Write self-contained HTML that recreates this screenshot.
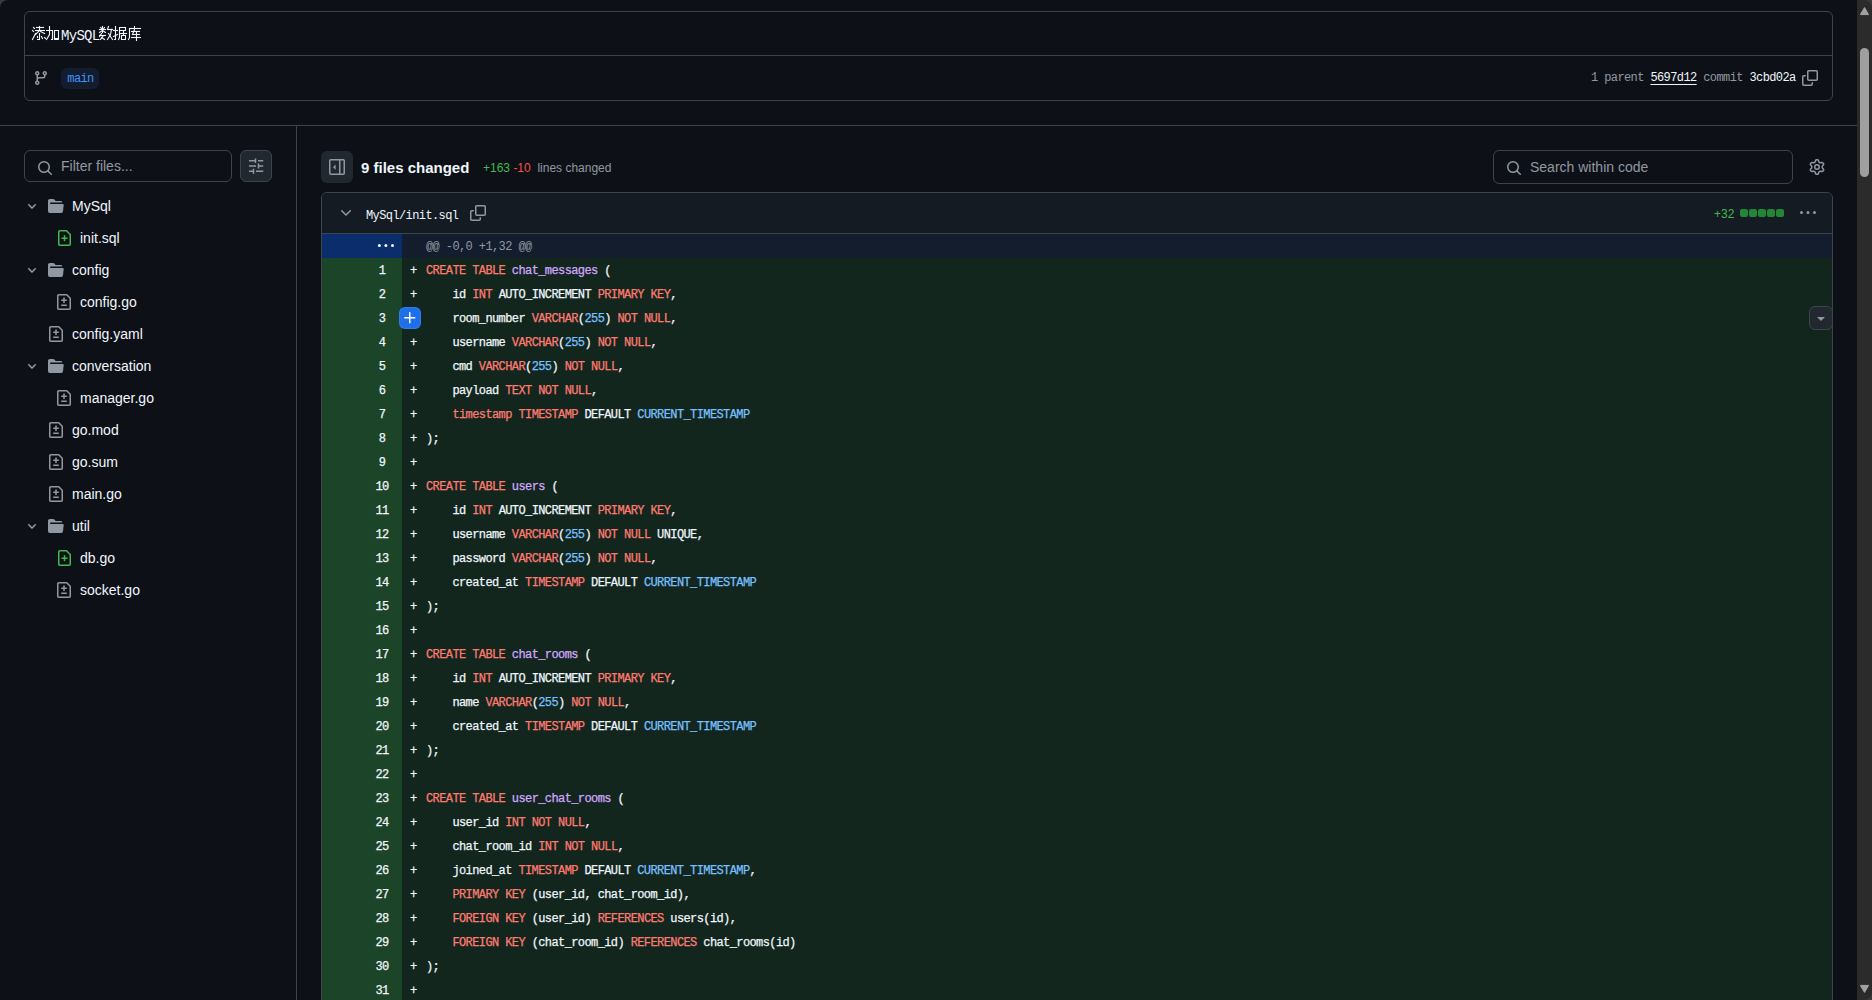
<!DOCTYPE html>
<html><head><meta charset="utf-8">
<style>
*{box-sizing:border-box;margin:0;padding:0}
html,body{width:1872px;height:1000px;overflow:hidden;background:#0d1117;font-family:"Liberation Sans",sans-serif;color:#f0f6fc}
.a{position:absolute}
.mono{font-family:"Liberation Mono",monospace}
#corner{left:0;top:0;width:10px;height:10px;background:#3b3b3b}
#corner::after{content:"";position:absolute;left:0;top:0;width:20px;height:20px;border-radius:8px 0 0 0;background:#0d1117}
.box{border:1px solid #3d444d;border-radius:6px}
#commit{left:24px;top:11px;width:1809px;height:90px}
#commit .div{left:0;right:0;top:43px;height:1px;background:#3d444d}
#mysql{left:61px;top:28px;font-size:14px;line-height:16px;white-space:pre;letter-spacing:-0.7px}
#badge{left:36px;top:56px;width:38px;height:21px;border-radius:6px;background:#121d2f;color:#4493f8;font-size:12px;line-height:22px;text-align:center;letter-spacing:-0.6px;padding-left:1px}
#meta{left:1566px;top:56px;font-size:12px;line-height:21px;color:#9198a1;white-space:pre;letter-spacing:-0.6px}
#meta .w{color:#f0f6fc}
#meta .ul{text-decoration:underline;text-underline-offset:3px}
#hdiv{left:0;top:125px;width:1857px;height:1px;background:#3d444d}
#vdiv{left:296px;top:126px;width:1px;height:874px;background:#3d444d}
#filter{left:24px;top:150px;width:208px;height:32px}
#filter span{position:absolute;left:36px;top:7px;font-size:14px;line-height:16px;color:#9198a1}
#setbtn{left:240px;top:150px;width:32px;height:32px;background:#212830}
.tree{left:0;top:190px;width:296px}
.ti{position:absolute;height:32px;font-size:14px;line-height:32px;color:#f0f6fc;white-space:pre}
#colbtn{left:321px;top:151px;width:32px;height:32px;border-radius:6px;background:#212830}
#fc{left:361px;top:157px;font-size:15px;font-weight:bold;line-height:22px}
#stat{left:483px;top:160px;font-size:12px;line-height:16px;white-space:pre;color:#9198a1}
#search{left:1493px;top:150px;width:300px;height:34px}
#search span{position:absolute;left:36px;top:8px;font-size:14px;line-height:16px;color:#9198a1}
#file{left:321px;top:192px;width:1512px;height:830px;overflow:hidden}
#fh{left:0;top:0;width:1510px;height:41px;background:#151b23;border-bottom:1px solid #3d444d;border-radius:6px 6px 0 0}
#fname{left:44px;top:15px;font-size:12px;line-height:16px;color:#f0f6fc;letter-spacing:-0.6px}
#plus32{left:1392px;top:13px;font-size:12px;line-height:16px;color:#3fb950}
.sq{position:absolute;top:16px;width:8px;height:8px;border-radius:2px;background:#238636}
.r{position:absolute;left:322px;width:1510px;height:24px}
.r b{position:absolute;left:0;top:0;width:80px;height:24px;background:#1c4428;font-weight:normal;text-align:center;padding-left:40px}
.r u,.r s{text-decoration:none}
.r b,.r u,.r s{-webkit-text-stroke:0.25px currentColor;font-family:"Liberation Mono",monospace;font-size:12px;line-height:26px;letter-spacing:-0.6px;color:#f0f6fc;white-space:pre}
.r u{position:absolute;left:88px;top:0}
.r s{position:absolute;left:80px;top:0;width:1430px;height:24px;background:#12261e;padding-left:24px}
.r u{z-index:2}
i{font-style:normal}
i.k{color:#ff7b72}
i.e{color:#d2a8ff}
i.c{color:#79c0ff}
#hunk{left:322px;top:234px;width:1510px;height:24px;background:#131d2e}
#hunknum{left:322px;top:234px;width:80px;height:24px;background:#0c2d6b}
#hunktxt{left:426px;top:234px;font-size:12px;line-height:26px;letter-spacing:-0.6px;color:#9198a1;white-space:pre}
#sb{left:1857px;top:0;width:15px;height:1000px;background:#2b2b2b}
#thumb{left:1860px;top:48px;width:9px;height:129px;border-radius:5px;background:#9f9f9f}
</style></head><body>
<div class="a" id="corner"></div>
<div class="a box" id="commit">
    <div class="a div"></div>
  <svg class="a" style="left:8px;top:58px" width="16" height="16" viewBox="0 0 16 16" fill="#9198a1"><path d="M9.5 3.25a2.25 2.25 0 1 1 3 2.122V6A2.5 2.5 0 0 1 10 8.5H6a1 1 0 0 0-1 1v1.128a2.251 2.251 0 1 1-1.5 0V5.372a2.25 2.25 0 1 1 1.5 0v1.836A2.493 2.493 0 0 1 6 7h4a1 1 0 0 0 1-1v-.628A2.25 2.25 0 0 1 9.5 3.25Zm-6 0a.75.75 0 1 0 1.5 0 .75.75 0 0 0-1.5 0Zm8.25-.75a.75.75 0 1 0 0 1.5.75.75 0 0 0 0-1.5ZM4.25 12a.75.75 0 1 0 0 1.5.75.75 0 0 0 0-1.5Z"/></svg>
  <div class="a mono" id="badge">main</div>
  <div class="a mono" id="meta">1 parent <span class="w ul">5697d12</span> commit <span class="w">3cbd02a</span>    </div>
  <svg class="a" style="left:1777px;top:58px" width="16" height="16" viewBox="0 0 16 16" fill="#9198a1"><path d="M0 6.75C0 5.784.784 5 1.75 5h1.5a.75.75 0 0 1 0 1.5h-1.5a.25.25 0 0 0-.25.25v7.5c0 .138.112.25.25.25h7.5a.25.25 0 0 0 .25-.25v-1.5a.75.75 0 0 1 1.5 0v1.5A1.75 1.75 0 0 1 9.25 16h-7.5A1.75 1.75 0 0 1 0 14.25Z"/><path d="M5 1.75C5 .784 5.784 0 6.75 0h7.5C15.216 0 16 .784 16 1.75v7.5A1.75 1.75 0 0 1 14.25 11h-7.5A1.75 1.75 0 0 1 5 9.25Zm1.75-.25a.25.25 0 0 0-.25.25v7.5c0 .138.112.25.25.25h7.5a.25.25 0 0 0 .25-.25v-7.5a.25.25 0 0 0-.25-.25Z"/></svg>
</div>
<svg class="a" style="left:0;top:0" width="150" height="50" fill="none" stroke="#f0f6fc" stroke-width="1.1" stroke-linecap="square"><polyline points="33.5,27.5 34.5,28.5"/><polyline points="32.5,30.5 33.5,31.5"/><polyline points="35.5,33.5 32.5,39.5"/><polyline points="36.5,27.5 43.5,27.5"/><polyline points="35.5,30.5 44.5,30.5"/><polyline points="39.5,26.5 39.5,30.5"/><polyline points="39.5,30.5 35.5,34.5"/><polyline points="40.5,31.5 44.5,33.5"/><polyline points="39.5,33.5 39.5,39.5 37.5,39.5"/><polyline points="37.5,36.5 37.5,37.5"/><polyline points="41.5,36.5 42.5,38.5"/><polyline points="44.5,37.5 45.5,38.5"/><polyline points="46.5,30.5 52.5,30.5 52.5,39.5 51.5,39.5"/><polyline points="49.5,26.5 49.5,34.5 46.5,39.5"/><polyline points="54.5,30.5 58.5,30.5 58.5,39.5 54.5,39.5 54.5,30.5"/><polyline points="54.5,38.5 58.5,38.5"/><polyline points="100.5,27.5 101.5,28.5"/><polyline points="104.5,27.5 103.5,28.5"/><polyline points="99.5,29.5 105.5,29.5"/><polyline points="102.5,26.5 102.5,32.5"/><polyline points="102.5,30.5 99.5,32.5"/><polyline points="102.5,30.5 105.5,32.5"/><polyline points="101.5,33.5 99.5,36.5"/><polyline points="99.5,35.5 105.5,35.5"/><polyline points="103.5,35.5 100.5,39.5"/><polyline points="101.5,37.5 104.5,39.5"/><polyline points="108.5,26.5 107.5,29.5"/><polyline points="107.5,29.5 112.5,29.5"/><polyline points="111.5,29.5 110.5,34.5 107.5,39.5"/><polyline points="108.5,33.5 112.5,39.5"/><polyline points="113.5,30.5 117.5,30.5"/><polyline points="115.5,26.5 115.5,39.5 114.5,39.5"/><polyline points="113.5,36.5 117.5,34.5"/><polyline points="119.5,27.5 125.5,27.5 125.5,30.5 119.5,30.5"/><polyline points="119.5,27.5 119.5,37.5 118.5,39.5"/><polyline points="120.5,33.5 126.5,33.5"/><polyline points="123.5,31.5 123.5,35.5"/><polyline points="121.5,35.5 125.5,35.5 125.5,39.5 121.5,39.5 121.5,35.5"/><polyline points="134.5,26.5 134.5,27.5"/><polyline points="129.5,28.5 140.5,28.5"/><polyline points="129.5,28.5 129.5,37.5 128.5,39.5"/><polyline points="131.5,31.5 139.5,31.5"/><polyline points="134.5,29.5 132.5,34.5"/><polyline points="132.5,34.5 139.5,34.5"/><polyline points="131.5,37.5 140.5,37.5"/><polyline points="136.5,32.5 136.5,40.5"/></svg>
<div class="a mono" id="mysql">MySQL</div>
<div class="a" id="hdiv"></div>
<div class="a" id="vdiv"></div>
<div class="a box" id="filter"><svg class="a" style="left:12px;top:9px" width="16" height="16" viewBox="0 0 16 16" fill="#9198a1"><path d="M10.68 11.74a6 6 0 0 1-7.922-8.982 6 6 0 0 1 8.982 7.922l3.04 3.04a.749.749 0 0 1-.326 1.275.749.749 0 0 1-.734-.215ZM11.5 7a4.499 4.499 0 1 0-8.997 0A4.499 4.499 0 0 0 11.5 7Z"/></svg><span>Filter files...</span></div>
<div class="a box" id="setbtn"><svg class="a" style="left:7px;top:7px" width="16" height="16" viewBox="0 0 16 16" fill="none" stroke="#9198a1" stroke-width="1.5"><path d="M1 2.75h6.5M7.5 0.5v4.5M10 2.75h5.25M1 8h7M10.5 5.5v5M10.5 8h4.75M1 13.25h4.5M5.5 10.75v5M8 13.25h7.25"/></svg></div>
<div class="a tree" id="tree"></div>
<svg class="a" style="left:26px;top:200px" width="12" height="12" viewBox="0 0 12 12" fill="#9198a1"><path d="M6 8.825c-.2 0-.4-.1-.5-.2l-3.3-3.3c-.3-.3-.3-.8 0-1.1.3-.3.8-.3 1.1 0l2.7 2.7 2.7-2.7c.3-.3.8-.3 1.1 0 .3.3.3.8 0 1.1l-3.2 3.2c-.2.2-.4.3-.6.3Z"/></svg>
<svg class="a" style="left:48px;top:198px" width="16" height="16" viewBox="0 0 16 16" fill="#9198a1"><path d="M.513 1.513A1.75 1.75 0 0 1 1.75 1h3.5c.55 0 1.07.26 1.4.7l.9 1.2a.25.25 0 0 0 .2.1H13a1 1 0 0 1 1 1v.5H2.75a.75.75 0 0 0 0 1.5h11.978a1 1 0 0 1 .994 1.117L15 13.25A1.75 1.75 0 0 1 13.25 15H1.75A1.75 1.75 0 0 1 0 13.25V2.75c0-.464.184-.91.513-1.237Z"/></svg>
<div class="ti" style="left:72px;top:190px">MySql</div>
<svg class="a" style="left:56px;top:230px" width="16" height="16" viewBox="0 0 16 16" fill="none" stroke="#3fb950" stroke-width="1.5"><path d="M3.75 0.75h6.7l3.8 3.8v9.7a1 1 0 0 1-1 1h-9.5a1 1 0 0 1-1-1v-12.5a1 1 0 0 1 1-1Z"/><path d="M8.5 5.25v6M5.5 8.25h6"/></svg>
<div class="ti" style="left:80px;top:222px">init.sql</div>
<svg class="a" style="left:26px;top:264px" width="12" height="12" viewBox="0 0 12 12" fill="#9198a1"><path d="M6 8.825c-.2 0-.4-.1-.5-.2l-3.3-3.3c-.3-.3-.3-.8 0-1.1.3-.3.8-.3 1.1 0l2.7 2.7 2.7-2.7c.3-.3.8-.3 1.1 0 .3.3.3.8 0 1.1l-3.2 3.2c-.2.2-.4.3-.6.3Z"/></svg>
<svg class="a" style="left:48px;top:262px" width="16" height="16" viewBox="0 0 16 16" fill="#9198a1"><path d="M.513 1.513A1.75 1.75 0 0 1 1.75 1h3.5c.55 0 1.07.26 1.4.7l.9 1.2a.25.25 0 0 0 .2.1H13a1 1 0 0 1 1 1v.5H2.75a.75.75 0 0 0 0 1.5h11.978a1 1 0 0 1 .994 1.117L15 13.25A1.75 1.75 0 0 1 13.25 15H1.75A1.75 1.75 0 0 1 0 13.25V2.75c0-.464.184-.91.513-1.237Z"/></svg>
<div class="ti" style="left:72px;top:254px">config</div>
<svg class="a" style="left:56px;top:294px" width="16" height="16" viewBox="0 0 16 16" fill="#9198a1"><path d="M1 1.75C1 .784 1.784 0 2.75 0h7.586c.464 0 .909.184 1.237.513l2.914 2.914c.329.328.513.773.513 1.237v9.586A1.75 1.75 0 0 1 13.25 16H2.75A1.75 1.75 0 0 1 1 14.25Zm1.75-.25a.25.25 0 0 0-.25.25v12.5c0 .138.112.25.25.25h10.5a.25.25 0 0 0 .25-.25V4.664a.25.25 0 0 0-.073-.177l-2.914-2.914a.25.25 0 0 0-.177-.073ZM8 3.25a.75.75 0 0 1 .75.75v1.5h1.5a.75.75 0 0 1 0 1.5h-1.5v1.5a.75.75 0 0 1-1.5 0V7h-1.5a.75.75 0 0 1 0-1.5h1.5V4A.75.75 0 0 1 8 3.25Zm-3 8a.75.75 0 0 1 .75-.75h4.5a.75.75 0 0 1 0 1.5h-4.5a.75.75 0 0 1-.75-.75Z"/></svg>
<div class="ti" style="left:80px;top:286px">config.go</div>
<svg class="a" style="left:48px;top:326px" width="16" height="16" viewBox="0 0 16 16" fill="#9198a1"><path d="M1 1.75C1 .784 1.784 0 2.75 0h7.586c.464 0 .909.184 1.237.513l2.914 2.914c.329.328.513.773.513 1.237v9.586A1.75 1.75 0 0 1 13.25 16H2.75A1.75 1.75 0 0 1 1 14.25Zm1.75-.25a.25.25 0 0 0-.25.25v12.5c0 .138.112.25.25.25h10.5a.25.25 0 0 0 .25-.25V4.664a.25.25 0 0 0-.073-.177l-2.914-2.914a.25.25 0 0 0-.177-.073ZM8 3.25a.75.75 0 0 1 .75.75v1.5h1.5a.75.75 0 0 1 0 1.5h-1.5v1.5a.75.75 0 0 1-1.5 0V7h-1.5a.75.75 0 0 1 0-1.5h1.5V4A.75.75 0 0 1 8 3.25Zm-3 8a.75.75 0 0 1 .75-.75h4.5a.75.75 0 0 1 0 1.5h-4.5a.75.75 0 0 1-.75-.75Z"/></svg>
<div class="ti" style="left:72px;top:318px">config.yaml</div>
<svg class="a" style="left:26px;top:360px" width="12" height="12" viewBox="0 0 12 12" fill="#9198a1"><path d="M6 8.825c-.2 0-.4-.1-.5-.2l-3.3-3.3c-.3-.3-.3-.8 0-1.1.3-.3.8-.3 1.1 0l2.7 2.7 2.7-2.7c.3-.3.8-.3 1.1 0 .3.3.3.8 0 1.1l-3.2 3.2c-.2.2-.4.3-.6.3Z"/></svg>
<svg class="a" style="left:48px;top:358px" width="16" height="16" viewBox="0 0 16 16" fill="#9198a1"><path d="M.513 1.513A1.75 1.75 0 0 1 1.75 1h3.5c.55 0 1.07.26 1.4.7l.9 1.2a.25.25 0 0 0 .2.1H13a1 1 0 0 1 1 1v.5H2.75a.75.75 0 0 0 0 1.5h11.978a1 1 0 0 1 .994 1.117L15 13.25A1.75 1.75 0 0 1 13.25 15H1.75A1.75 1.75 0 0 1 0 13.25V2.75c0-.464.184-.91.513-1.237Z"/></svg>
<div class="ti" style="left:72px;top:350px">conversation</div>
<svg class="a" style="left:56px;top:390px" width="16" height="16" viewBox="0 0 16 16" fill="#9198a1"><path d="M1 1.75C1 .784 1.784 0 2.75 0h7.586c.464 0 .909.184 1.237.513l2.914 2.914c.329.328.513.773.513 1.237v9.586A1.75 1.75 0 0 1 13.25 16H2.75A1.75 1.75 0 0 1 1 14.25Zm1.75-.25a.25.25 0 0 0-.25.25v12.5c0 .138.112.25.25.25h10.5a.25.25 0 0 0 .25-.25V4.664a.25.25 0 0 0-.073-.177l-2.914-2.914a.25.25 0 0 0-.177-.073ZM8 3.25a.75.75 0 0 1 .75.75v1.5h1.5a.75.75 0 0 1 0 1.5h-1.5v1.5a.75.75 0 0 1-1.5 0V7h-1.5a.75.75 0 0 1 0-1.5h1.5V4A.75.75 0 0 1 8 3.25Zm-3 8a.75.75 0 0 1 .75-.75h4.5a.75.75 0 0 1 0 1.5h-4.5a.75.75 0 0 1-.75-.75Z"/></svg>
<div class="ti" style="left:80px;top:382px">manager.go</div>
<svg class="a" style="left:48px;top:422px" width="16" height="16" viewBox="0 0 16 16" fill="#9198a1"><path d="M1 1.75C1 .784 1.784 0 2.75 0h7.586c.464 0 .909.184 1.237.513l2.914 2.914c.329.328.513.773.513 1.237v9.586A1.75 1.75 0 0 1 13.25 16H2.75A1.75 1.75 0 0 1 1 14.25Zm1.75-.25a.25.25 0 0 0-.25.25v12.5c0 .138.112.25.25.25h10.5a.25.25 0 0 0 .25-.25V4.664a.25.25 0 0 0-.073-.177l-2.914-2.914a.25.25 0 0 0-.177-.073ZM8 3.25a.75.75 0 0 1 .75.75v1.5h1.5a.75.75 0 0 1 0 1.5h-1.5v1.5a.75.75 0 0 1-1.5 0V7h-1.5a.75.75 0 0 1 0-1.5h1.5V4A.75.75 0 0 1 8 3.25Zm-3 8a.75.75 0 0 1 .75-.75h4.5a.75.75 0 0 1 0 1.5h-4.5a.75.75 0 0 1-.75-.75Z"/></svg>
<div class="ti" style="left:72px;top:414px">go.mod</div>
<svg class="a" style="left:48px;top:454px" width="16" height="16" viewBox="0 0 16 16" fill="#9198a1"><path d="M1 1.75C1 .784 1.784 0 2.75 0h7.586c.464 0 .909.184 1.237.513l2.914 2.914c.329.328.513.773.513 1.237v9.586A1.75 1.75 0 0 1 13.25 16H2.75A1.75 1.75 0 0 1 1 14.25Zm1.75-.25a.25.25 0 0 0-.25.25v12.5c0 .138.112.25.25.25h10.5a.25.25 0 0 0 .25-.25V4.664a.25.25 0 0 0-.073-.177l-2.914-2.914a.25.25 0 0 0-.177-.073ZM8 3.25a.75.75 0 0 1 .75.75v1.5h1.5a.75.75 0 0 1 0 1.5h-1.5v1.5a.75.75 0 0 1-1.5 0V7h-1.5a.75.75 0 0 1 0-1.5h1.5V4A.75.75 0 0 1 8 3.25Zm-3 8a.75.75 0 0 1 .75-.75h4.5a.75.75 0 0 1 0 1.5h-4.5a.75.75 0 0 1-.75-.75Z"/></svg>
<div class="ti" style="left:72px;top:446px">go.sum</div>
<svg class="a" style="left:48px;top:486px" width="16" height="16" viewBox="0 0 16 16" fill="#9198a1"><path d="M1 1.75C1 .784 1.784 0 2.75 0h7.586c.464 0 .909.184 1.237.513l2.914 2.914c.329.328.513.773.513 1.237v9.586A1.75 1.75 0 0 1 13.25 16H2.75A1.75 1.75 0 0 1 1 14.25Zm1.75-.25a.25.25 0 0 0-.25.25v12.5c0 .138.112.25.25.25h10.5a.25.25 0 0 0 .25-.25V4.664a.25.25 0 0 0-.073-.177l-2.914-2.914a.25.25 0 0 0-.177-.073ZM8 3.25a.75.75 0 0 1 .75.75v1.5h1.5a.75.75 0 0 1 0 1.5h-1.5v1.5a.75.75 0 0 1-1.5 0V7h-1.5a.75.75 0 0 1 0-1.5h1.5V4A.75.75 0 0 1 8 3.25Zm-3 8a.75.75 0 0 1 .75-.75h4.5a.75.75 0 0 1 0 1.5h-4.5a.75.75 0 0 1-.75-.75Z"/></svg>
<div class="ti" style="left:72px;top:478px">main.go</div>
<svg class="a" style="left:26px;top:520px" width="12" height="12" viewBox="0 0 12 12" fill="#9198a1"><path d="M6 8.825c-.2 0-.4-.1-.5-.2l-3.3-3.3c-.3-.3-.3-.8 0-1.1.3-.3.8-.3 1.1 0l2.7 2.7 2.7-2.7c.3-.3.8-.3 1.1 0 .3.3.3.8 0 1.1l-3.2 3.2c-.2.2-.4.3-.6.3Z"/></svg>
<svg class="a" style="left:48px;top:518px" width="16" height="16" viewBox="0 0 16 16" fill="#9198a1"><path d="M.513 1.513A1.75 1.75 0 0 1 1.75 1h3.5c.55 0 1.07.26 1.4.7l.9 1.2a.25.25 0 0 0 .2.1H13a1 1 0 0 1 1 1v.5H2.75a.75.75 0 0 0 0 1.5h11.978a1 1 0 0 1 .994 1.117L15 13.25A1.75 1.75 0 0 1 13.25 15H1.75A1.75 1.75 0 0 1 0 13.25V2.75c0-.464.184-.91.513-1.237Z"/></svg>
<div class="ti" style="left:72px;top:510px">util</div>
<svg class="a" style="left:56px;top:550px" width="16" height="16" viewBox="0 0 16 16" fill="none" stroke="#3fb950" stroke-width="1.5"><path d="M3.75 0.75h6.7l3.8 3.8v9.7a1 1 0 0 1-1 1h-9.5a1 1 0 0 1-1-1v-12.5a1 1 0 0 1 1-1Z"/><path d="M8.5 5.25v6M5.5 8.25h6"/></svg>
<div class="ti" style="left:80px;top:542px">db.go</div>
<svg class="a" style="left:56px;top:582px" width="16" height="16" viewBox="0 0 16 16" fill="#9198a1"><path d="M1 1.75C1 .784 1.784 0 2.75 0h7.586c.464 0 .909.184 1.237.513l2.914 2.914c.329.328.513.773.513 1.237v9.586A1.75 1.75 0 0 1 13.25 16H2.75A1.75 1.75 0 0 1 1 14.25Zm1.75-.25a.25.25 0 0 0-.25.25v12.5c0 .138.112.25.25.25h10.5a.25.25 0 0 0 .25-.25V4.664a.25.25 0 0 0-.073-.177l-2.914-2.914a.25.25 0 0 0-.177-.073ZM8 3.25a.75.75 0 0 1 .75.75v1.5h1.5a.75.75 0 0 1 0 1.5h-1.5v1.5a.75.75 0 0 1-1.5 0V7h-1.5a.75.75 0 0 1 0-1.5h1.5V4A.75.75 0 0 1 8 3.25Zm-3 8a.75.75 0 0 1 .75-.75h4.5a.75.75 0 0 1 0 1.5h-4.5a.75.75 0 0 1-.75-.75Z"/></svg>
<div class="ti" style="left:80px;top:574px">socket.go</div><div class="a" id="colbtn"><svg class="a" style="left:8px;top:8px" width="16" height="16" viewBox="0 0 16 16" fill="#9198a1"><path d="M1.75 0h12.5C15.216 0 16 .784 16 1.75v12.5A1.75 1.75 0 0 1 14.25 16H1.75A1.75 1.75 0 0 1 0 14.25V1.75C0 .784.784 0 1.750 0ZM1.5 1.75v12.5c0 .138.112.25.25.25H10v-13H1.75a.25.25 0 0 0-.25.25ZM11.5 14.5h2.75a.25.25 0 0 0 .25-.25V1.75a.25.25 0 0 0-.25-.25H11.5Z"/><path d="M4 8.2 6.6 5.6v5.2Z"/></svg></div>
<div class="a" id="fc">9 files changed</div>
<div class="a" id="stat"><span style="color:#3fb950">+163</span> <span style="color:#f85149">-10</span>  lines changed</div>
<div class="a box" id="search"><svg class="a" style="left:12px;top:9px" width="16" height="16" viewBox="0 0 16 16" fill="#9198a1"><path d="M10.68 11.74a6 6 0 0 1-7.922-8.982 6 6 0 0 1 8.982 7.922l3.04 3.04a.749.749 0 0 1-.326 1.275.749.749 0 0 1-.734-.215ZM11.5 7a4.499 4.499 0 1 0-8.997 0A4.499 4.499 0 0 0 11.5 7Z"/></svg><span>Search within code</span></div>
<svg class="a" style="left:1809px;top:159px" width="16" height="16" viewBox="0 0 16 16" fill="#9198a1"><path d="M8 0a8.2 8.2 0 0 1 .701.031C9.444.095 9.99.645 10.16 1.29l.288 1.107c.018.066.079.158.212.224.231.114.454.243.668.386.123.082.233.09.299.071l1.103-.303c.644-.176 1.392.021 1.82.63.27.385.506.792.704 1.218.315.675.111 1.422-.364 1.891l-.814.806c-.049.048-.098.147-.088.294.016.257.016.515 0 .772-.01.147.038.246.088.294l.814.806c.475.469.679 1.216.364 1.891a7.977 7.977 0 0 1-.704 1.217c-.428.61-1.176.807-1.820.63l-1.102-.302c-.067-.019-.177-.011-.3.071a5.909 5.909 0 0 1-.668.386c-.133.066-.194.158-.211.224l-.29 1.106c-.168.646-.715 1.196-1.458 1.26a8.006 8.006 0 0 1-1.402 0c-.743-.064-1.289-.614-1.458-1.26l-.289-1.106c-.018-.066-.079-.158-.212-.224a5.738 5.738 0 0 1-.668-.386c-.123-.082-.233-.09-.299-.071l-1.103.303c-.644.176-1.392-.021-1.82-.63a8.12 8.12 0 0 1-.704-1.218c-.315-.675-.111-1.422.363-1.891l.815-.806c.05-.048.098-.147.088-.294a6.214 6.214 0 0 1 0-.772c.01-.147-.038-.246-.088-.294l-.815-.806C.635 6.045.431 5.298.746 4.623a7.92 7.92 0 0 1 .704-1.217c.428-.61 1.176-.807 1.82-.63l1.102.302c.067.019.177.011.3-.071.214-.143.437-.272.668-.386.133-.066.194-.158.211-.224l.29-1.106C6.009.645 6.556.095 7.299.03 7.53.01 7.764 0 8 0Zm-.571 1.525c-.036.003-.108.036-.137.146l-.289 1.105c-.147.561-.549.967-.998 1.189-.173.086-.34.183-.5.29-.417.278-.97.423-1.529.27l-1.103-.303c-.109-.03-.175.016-.195.045-.22.312-.412.644-.573.99-.014.031-.021.11.059.19l.815.806c.411.406.562.957.53 1.456a4.709 4.709 0 0 0 0 .582c.032.499-.119 1.050-.53 1.456l-.815.806c-.081.08-.073.159-.059.19.162.346.353.677.573.989.02.03.085.076.195.046l1.102-.303c.56-.153 1.113-.008 1.53.27.161.107.328.204.501.29.447.222.85.629.997 1.189l.289 1.105c.029.109.101.143.137.146a6.6 6.6 0 0 0 1.142 0c.036-.003.108-.036.137-.146l.289-1.105c.147-.561.549-.967.998-1.189.173-.086.34-.183.5-.29.417-.278.97-.423 1.529-.27l1.103.303c.109.029.175-.016.195-.045.22-.313.411-.644.573-.99.014-.031.021-.11-.059-.19l-.815-.806c-.411-.406-.562-.957-.53-1.456a4.709 4.709 0 0 0 0-.582c-.032-.499.119-1.05.53-1.456l.815-.806c.081-.08.073-.159.059-.19a6.464 6.464 0 0 0-.573-.989c-.02-.03-.085-.076-.195-.046l-1.102.303c-.56.153-1.113.008-1.53-.27a4.44 4.44 0 0 0-.501-.29c-.447-.222-.85-.629-.997-1.189l-.289-1.105c-.029-.11-.101-.143-.137-.146a6.6 6.6 0 0 0-1.142 0ZM11 8a3 3 0 1 1-6 0 3 3 0 0 1 6 0ZM9.5 8a1.5 1.5 0 1 0-3.001.001A1.5 1.5 0 0 0 9.5 8Z"/></svg>
<div class="a box" id="file">
  <div class="a" id="fh">
    <svg class="a" style="left:16px;top:12px" width="16" height="16" viewBox="0 0 16 16" fill="#9198a1"><path d="M12.78 5.22a.749.749 0 0 1 0 1.06l-4.25 4.25a.749.749 0 0 1-1.06 0L3.22 6.28a.749.749 0 0 1 .326-1.275.749.749 0 0 1 .734.215L8 8.939l3.72-3.719a.749.749 0 0 1 1.06 0Z"/></svg>
    <div class="a mono" id="fname">MySql/init.sql</div>
    <svg class="a" style="left:148px;top:12px" width="16" height="16" viewBox="0 0 16 16" fill="#9198a1"><path d="M0 6.75C0 5.784.784 5 1.75 5h1.5a.75.75 0 0 1 0 1.5h-1.5a.25.25 0 0 0-.25.25v7.5c0 .138.112.25.25.25h7.5a.25.25 0 0 0 .25-.25v-1.5a.75.75 0 0 1 1.5 0v1.5A1.75 1.75 0 0 1 9.25 16h-7.5A1.75 1.75 0 0 1 0 14.25Z"/><path d="M5 1.75C5 .784 5.784 0 6.75 0h7.5C15.216 0 16 .784 16 1.75v7.5A1.75 1.75 0 0 1 14.25 11h-7.5A1.75 1.75 0 0 1 5 9.25Zm1.75-.25a.25.25 0 0 0-.25.25v7.5c0 .138.112.25.25.25h7.5a.25.25 0 0 0 .25-.25v-7.5a.25.25 0 0 0-.25-.25Z"/></svg>
    <div class="a" id="plus32">+32</div>
    <div class="sq" style="left:1418px"></div><div class="sq" style="left:1427px"></div><div class="sq" style="left:1436px"></div><div class="sq" style="left:1445px"></div><div class="sq" style="left:1454px"></div>
    <svg class="a" style="left:1478px;top:12px" width="16" height="16" viewBox="0 0 16 16" fill="#9198a1"><path d="M8 9a1.5 1.5 0 1 0 0-3 1.5 1.5 0 0 0 0 3ZM1.5 9a1.5 1.5 0 1 0 0-3 1.5 1.5 0 0 0 0 3Zm13 0a1.5 1.5 0 1 0 0-3 1.5 1.5 0 0 0 0 3Z"/></svg>
  </div>
</div>
<div class="a" id="hunk"></div>
<div class="a" id="hunknum"></div>
<svg class="a" style="left:377px;top:238px" width="18" height="16" viewBox="0 0 18 16" fill="#f0f6fc"><circle cx="2.4" cy="7.5" r="1.5"/><circle cx="8.9" cy="7.5" r="1.5"/><circle cx="15.5" cy="7.5" r="1.5"/></svg>
<div class="a mono" id="hunktxt">@@ -0,0 +1,32 @@</div>
<div class="r" style="top:258px"><b>1</b><u>+</u><s><i class="k">CREATE</i> <i class="k">TABLE</i> <i class="e">chat_messages</i> (</s></div>
<div class="r" style="top:282px"><b>2</b><u>+</u><s>    id <i class="k">INT</i> AUTO_INCREMENT <i class="k">PRIMARY</i> <i class="k">KEY</i>,</s></div>
<div class="r" style="top:306px"><b>3</b><u>+</u><s>    room_number <i class="k">VARCHAR</i>(<i class="c">255</i>) <i class="k">NOT</i> <i class="k">NULL</i>,</s></div>
<div class="r" style="top:330px"><b>4</b><u>+</u><s>    username <i class="k">VARCHAR</i>(<i class="c">255</i>) <i class="k">NOT</i> <i class="k">NULL</i>,</s></div>
<div class="r" style="top:354px"><b>5</b><u>+</u><s>    cmd <i class="k">VARCHAR</i>(<i class="c">255</i>) <i class="k">NOT</i> <i class="k">NULL</i>,</s></div>
<div class="r" style="top:378px"><b>6</b><u>+</u><s>    payload <i class="k">TEXT</i> <i class="k">NOT</i> <i class="k">NULL</i>,</s></div>
<div class="r" style="top:402px"><b>7</b><u>+</u><s>    <i class="k">timestamp</i> <i class="k">TIMESTAMP</i> DEFAULT <i class="c">CURRENT_TIMESTAMP</i></s></div>
<div class="r" style="top:426px"><b>8</b><u>+</u><s>);</s></div>
<div class="r" style="top:450px"><b>9</b><u>+</u><s></s></div>
<div class="r" style="top:474px"><b>10</b><u>+</u><s><i class="k">CREATE</i> <i class="k">TABLE</i> <i class="e">users</i> (</s></div>
<div class="r" style="top:498px"><b>11</b><u>+</u><s>    id <i class="k">INT</i> AUTO_INCREMENT <i class="k">PRIMARY</i> <i class="k">KEY</i>,</s></div>
<div class="r" style="top:522px"><b>12</b><u>+</u><s>    username <i class="k">VARCHAR</i>(<i class="c">255</i>) <i class="k">NOT</i> <i class="k">NULL</i> UNIQUE,</s></div>
<div class="r" style="top:546px"><b>13</b><u>+</u><s>    password <i class="k">VARCHAR</i>(<i class="c">255</i>) <i class="k">NOT</i> <i class="k">NULL</i>,</s></div>
<div class="r" style="top:570px"><b>14</b><u>+</u><s>    created_at <i class="k">TIMESTAMP</i> DEFAULT <i class="c">CURRENT_TIMESTAMP</i></s></div>
<div class="r" style="top:594px"><b>15</b><u>+</u><s>);</s></div>
<div class="r" style="top:618px"><b>16</b><u>+</u><s></s></div>
<div class="r" style="top:642px"><b>17</b><u>+</u><s><i class="k">CREATE</i> <i class="k">TABLE</i> <i class="e">chat_rooms</i> (</s></div>
<div class="r" style="top:666px"><b>18</b><u>+</u><s>    id <i class="k">INT</i> AUTO_INCREMENT <i class="k">PRIMARY</i> <i class="k">KEY</i>,</s></div>
<div class="r" style="top:690px"><b>19</b><u>+</u><s>    name <i class="k">VARCHAR</i>(<i class="c">255</i>) <i class="k">NOT</i> <i class="k">NULL</i>,</s></div>
<div class="r" style="top:714px"><b>20</b><u>+</u><s>    created_at <i class="k">TIMESTAMP</i> DEFAULT <i class="c">CURRENT_TIMESTAMP</i></s></div>
<div class="r" style="top:738px"><b>21</b><u>+</u><s>);</s></div>
<div class="r" style="top:762px"><b>22</b><u>+</u><s></s></div>
<div class="r" style="top:786px"><b>23</b><u>+</u><s><i class="k">CREATE</i> <i class="k">TABLE</i> <i class="e">user_chat_rooms</i> (</s></div>
<div class="r" style="top:810px"><b>24</b><u>+</u><s>    user_id <i class="k">INT</i> <i class="k">NOT</i> <i class="k">NULL</i>,</s></div>
<div class="r" style="top:834px"><b>25</b><u>+</u><s>    chat_room_id <i class="k">INT</i> <i class="k">NOT</i> <i class="k">NULL</i>,</s></div>
<div class="r" style="top:858px"><b>26</b><u>+</u><s>    joined_at <i class="k">TIMESTAMP</i> DEFAULT <i class="c">CURRENT_TIMESTAMP</i>,</s></div>
<div class="r" style="top:882px"><b>27</b><u>+</u><s>    <i class="k">PRIMARY</i> <i class="k">KEY</i> (user_id, chat_room_id),</s></div>
<div class="r" style="top:906px"><b>28</b><u>+</u><s>    <i class="k">FOREIGN</i> <i class="k">KEY</i> (user_id) <i class="k">REFERENCES</i> users(id),</s></div>
<div class="r" style="top:930px"><b>29</b><u>+</u><s>    <i class="k">FOREIGN</i> <i class="k">KEY</i> (chat_room_id) <i class="k">REFERENCES</i> chat_rooms(id)</s></div>
<div class="r" style="top:954px"><b>30</b><u>+</u><s>);</s></div>
<div class="r" style="top:978px"><b>31</b><u>+</u><s></s></div><div class="a" style="left:399px;top:307px;width:22px;height:22px;border-radius:6px;background:#1f6feb;border:1px solid rgba(240,246,252,0.1);z-index:5"><svg class="a" style="left:2px;top:2px" width="16" height="16" viewBox="0 0 16 16" fill="#ffffff"><path d="M7.75 2a.75.75 0 0 1 .75.75V7h4.250a.75.75 0 0 1 0 1.5H8.5v4.25a.75.75 0 0 1-.75.75.75.75 0 0 1-.75-.75V8.5H2.75a.75.75 0 0 1 0-1.5H7V2.75A.75.75 0 0 1 7.75 2Z"/></svg></div>
<div class="a" style="left:1809px;top:306px;width:24px;height:24px;border-radius:6px;background:#212830;border:1px solid #3d444d;z-index:5"><svg class="a" style="left:3px;top:3px" width="16" height="16" viewBox="0 0 16 16" fill="#9198a1"><path d="m4.427 7.427 3.396 3.396a.25.25 0 0 0 .354 0l3.396-3.396A.25.25 0 0 0 11.396 7H4.604a.25.25 0 0 0-.177.427Z"/></svg></div>
<div class="a" id="sb"></div>
<div class="a" id="thumb"></div>
<div class="a" style="left:1862px;top:0px;width:10px;height:10px;background:#3b3b3b;overflow:hidden"><div class="a" style="left:-10px;top:0px;width:20px;height:20px;border-radius:0 8px 0 0;background:#2b2b2b"></div></div>
<div class="a" style="left:1862px;top:990px;width:10px;height:10px;background:#3b3b3b;overflow:hidden"><div class="a" style="left:-10px;top:-10px;width:20px;height:20px;border-radius:0 0 8px 0;background:#2b2b2b"></div></div>
<svg class="a" style="left:1857px;top:0px" width="15" height="1000" viewBox="0 0 15 1000" fill="#a3a3a3" stroke="#a3a3a3" stroke-width="1" stroke-linejoin="round"><path d="M3.4 14.6h8.2l-4.1-7Z"/><path d="M3.4 985.4h8.2l-4.1 7Z"/></svg>
</body></html>
